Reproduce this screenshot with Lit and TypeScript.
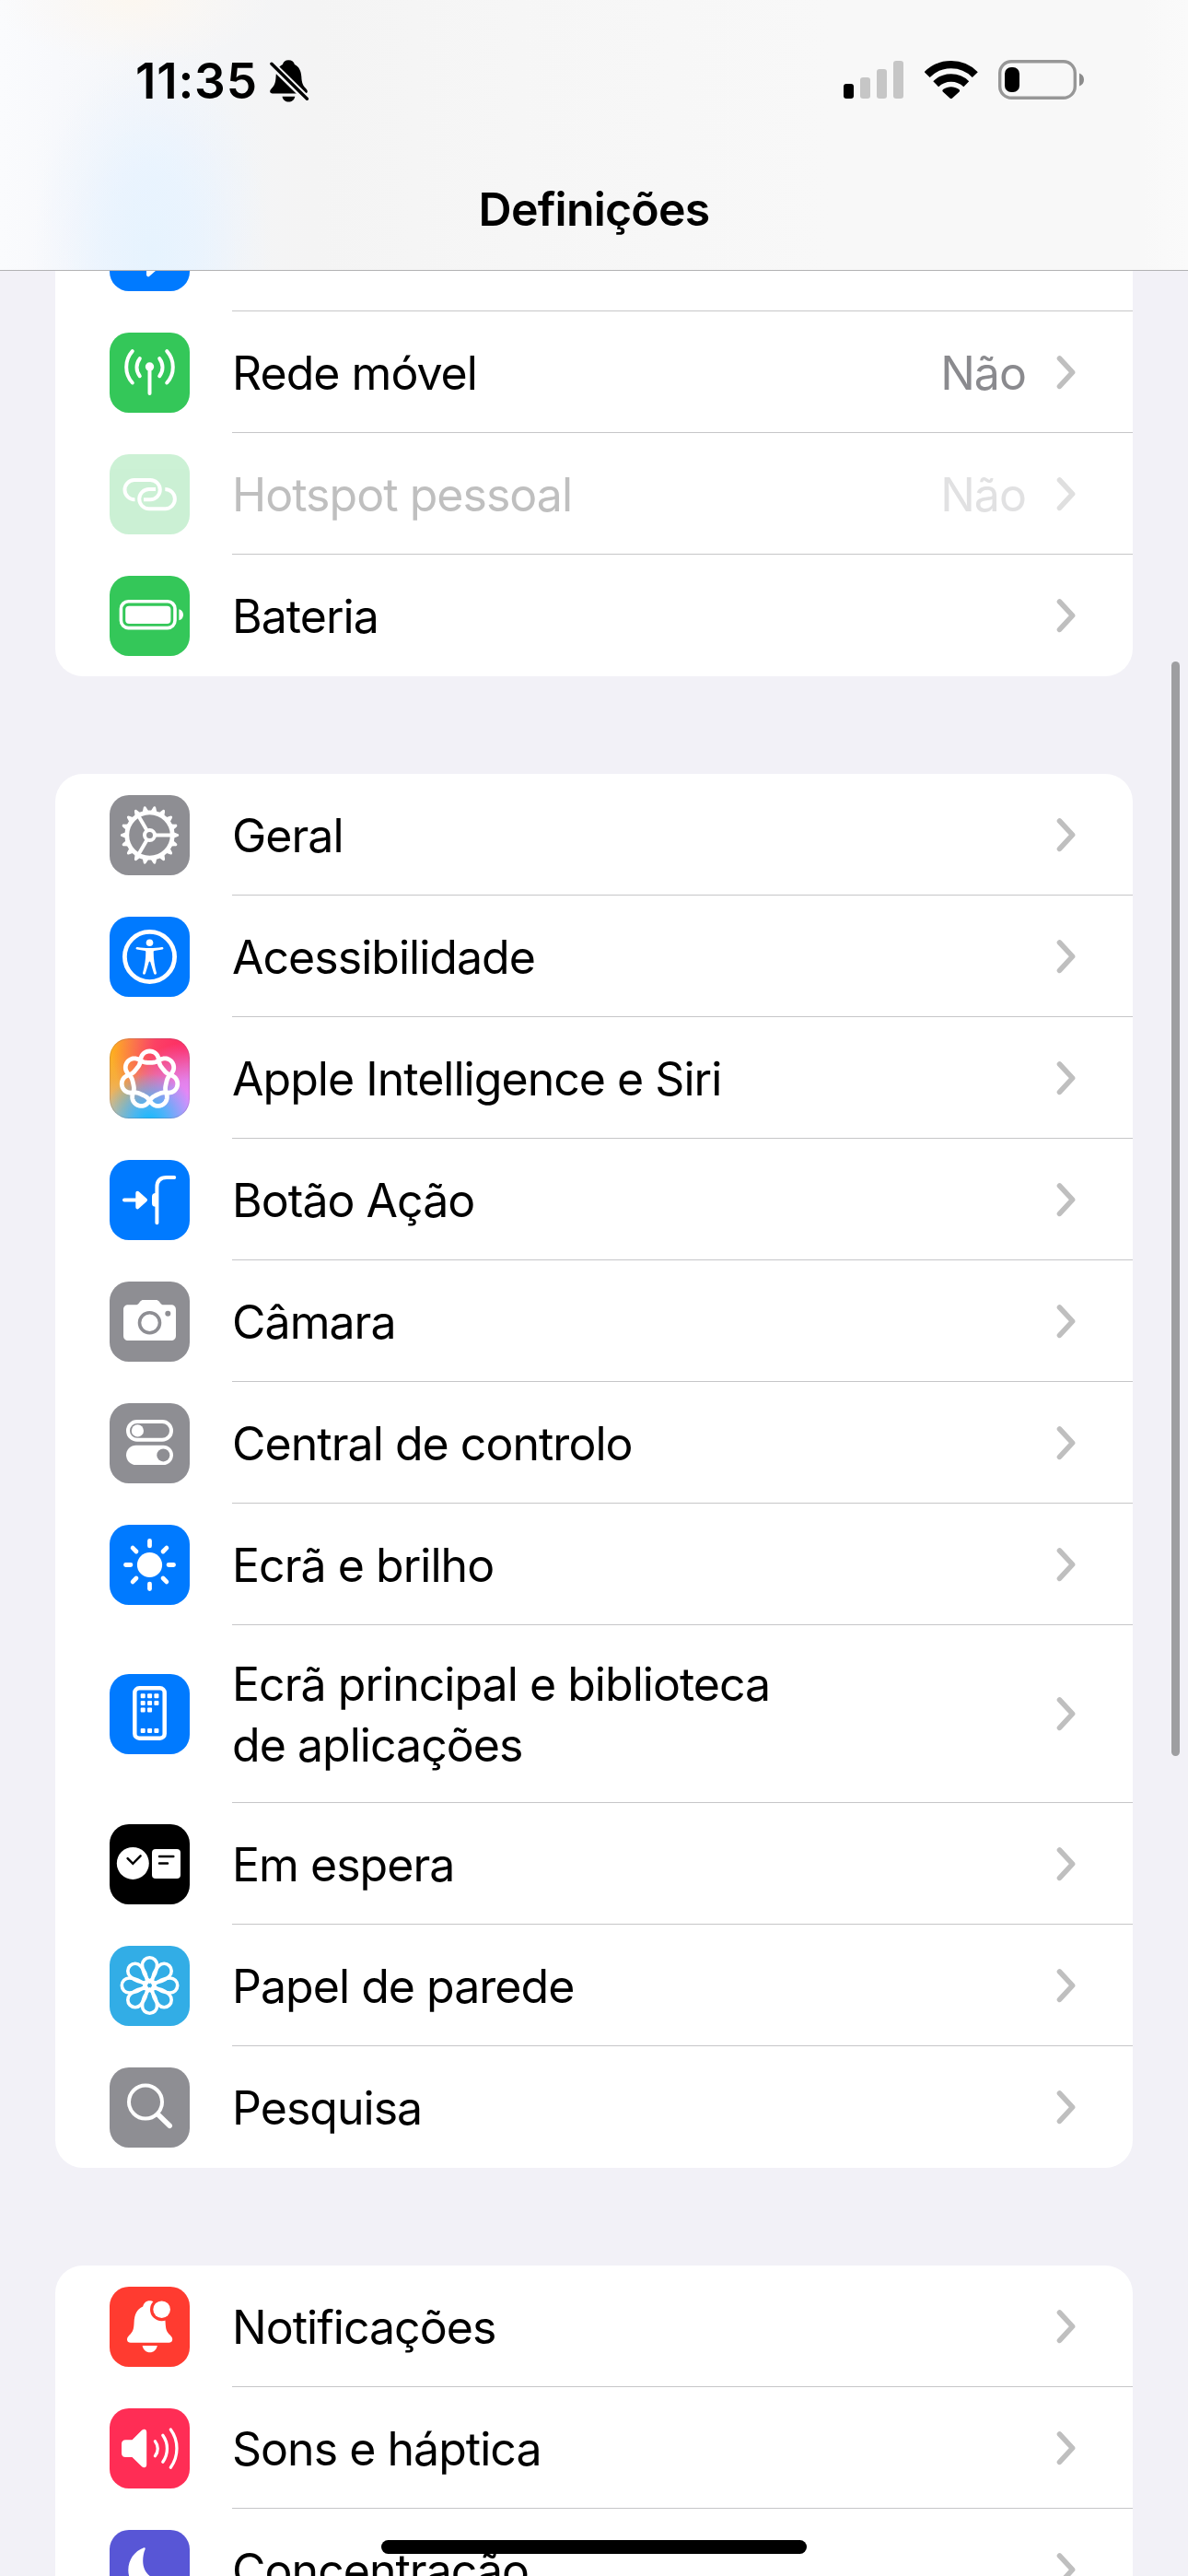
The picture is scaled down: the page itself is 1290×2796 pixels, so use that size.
import { LitElement, html, svg, css, nothing, TemplateResult, SVGTemplateResult } from "lit";
import { customElement, property } from "lit/decorators.js";
import { classMap } from "lit/directives/class-map.js";

type Glyph = SVGTemplateResult;

interface Item {
  label: string;
  lines?: string[];
  tone: string;
  glyph: Glyph;
  value?: string;
  disabled?: boolean;
}

const C = 43.5;

/** Closed seven-lobed knot: the radius oscillates 3.5 times per turn, over two turns. */
function knotPath(cx: number, cy: number, radius: number, swing: number, bulge: number): string {
  const steps = 280;
  const points: string[] = [];
  for (let i = 0; i < steps; i++) {
    const t = (i / steps) * Math.PI * 4;
    const r = radius + swing * Math.cos(3.5 * t) + 0.8 * Math.cos(7 * t);
    const a = t + bulge * Math.sin(7 * t);
    points.push(`${(cx + r * Math.sin(a)).toFixed(2)} ${(cy - r * Math.cos(a)).toFixed(2)}`);
  }
  return `M${points.join("L")}Z`;
}

const range = (n: number) => Array.from({ length: n }, (_, i) => i);

const bluetooth = svg`<path class="line w4" d="M28 30.5 56 57 42 69.3V17.7L56 30.5 28 57"/>`;

const antenna = svg`
  <circle class="solid" cx="43.5" cy="37" r="4.7"/>
  <path class="line w4" d="M43.5 38V66"/>
  <path class="line w4" d="M32.8 28.2C28.4 34 28.4 41.500 32.800 47.200M54.200 28.200C58.600 34 58.600 41.500 54.200 47.200M24.800 20.200C16 30 16 45 24.800 54.500M62.200 20.200C71 30 71 45 62.200 54.500"/>`;

const links = svg`
  <path class="line w4 butt" d="M27.500 49.200A10.500 10.500 0 0 1 26.700 28H44.200A10.600 10.600 0 0 1 44.200 49.200H37"/>
  <path class="line w4 butt" d="M50 38H42.800A10.600 10.600 0 0 0 42.800 59.200H60.300A10.600 10.600 0 0 0 60.300 38"/>`;

const battery = svg`
  <rect class="line w35" x="12.400" y="27.800" width="58.600" height="28.800" rx="8"/>
  <rect class="solid" x="17.200" y="32.700" width="49.200" height="19.200" rx="4"/>
  <path class="solid" d="M75.400 36.200C78.300 37 80 39.200 80 42.200S78.300 47.500 75.400 48.300Z"/>`;

const gear = svg`
  <circle class="line w5" cx=${C} cy=${C} r="24.700"/>
  ${range(18).map(
    (i) => svg`<path class="solid" transform="rotate(${i * 20} 43.5 43.5)" d="M69.500 40.200 73.800 41.900Q75.200 42.300 75.200 43.500T73.800 45.100L69.500 46.800Z"/>`
  )}
  <circle class="line w4" cx=${C} cy=${C} r="5.500"/>
  ${range(3).map((i) => svg`<path class="line w4 butt" transform="rotate(${i * 120} 43.5 43.5)" d="M49.500 43.500H67"/>`)}`;

const person = svg`
  <circle class="line w5" cx=${C} cy=${C} r="27.100"/>
  <circle class="solid" cx="43.500" cy="28.200" r="3.800"/>
  <path class="solid" d="M30.200 32.900C38 34.200 49 34.200 56.800 32.900C58.700 32.700 59.100 35.100 57.400 35.600L48.500 37C47.800 37.200 47.700 37.700 47.700 38.400C47.700 46 49 54 50.900 60.800C51.400 62.800 48.900 63.400 48.100 61.700L44.300 49.300Q43.500 47.700 42.700 49.300L38.900 61.700C38.100 63.400 35.600 62.800 36.100 60.800C38 54 39.300 46 39.300 38.400C39.300 37.700 39.200 37.200 38.500 37L29.600 35.600C27.900 35.100 28.300 32.700 30.200 32.900Z"/>`;

const knot = svg`<path class="line w5" d=${knotPath(43.5, 44.7, 23.8, 6.2, 0.05)}/>`;

const actionButton = svg`
  <path class="line w4" d="M16 43.500H30"/>
  <path class="solid join" d="M30.300 35.700 39 43.500 30.300 51.300Z"/>
  <path class="line w4" d="M51.400 68.200V29.500Q51.400 19 62 19H70.200"/>
  <path class="solid" d="M50 36C47.300 36 46 37.300 46 40V47C46 49.700 47.300 50.800 50 50.800Z"/>`;

const camera = svg`
  <path class="solid" d="M20.500 25.300H28.500C30 25.300 31 24.500 31.800 23.500L33.300 21.600C34.300 20.500 35 20 36.700 20H50.300C52 20 52.700 20.500 53.700 21.600L55.200 23.500C56 24.500 57 25.300 58.500 25.300H66.500C70.200 25.300 72 27.200 72 30.700V58.500C72 62.100 70.200 64 66.500 64H20.500C16.800 64 15 62.100 15 58.500V30.700C15 27.200 16.800 25.300 20.500 25.300Z"/>
  <circle class="cut w35" cx="43.500" cy="44.700" r="11"/>
  <circle class="hole" cx="63.300" cy="34.800" r="3"/>`;

const toggles = svg`
  <rect class="line w4" x="20" y="20" width="47" height="19.800" rx="9.900"/>
  <circle class="solid" cx="30.400" cy="29.900" r="6.600"/>
  <rect class="solid" x="18" y="45.700" width="51" height="21.300" rx="10.650"/>
  <circle class="hole" cx="58.300" cy="56.400" r="7"/>`;

const sun = svg`
  <circle class="solid" cx=${C} cy=${C} r="13.600"/>
  ${range(8).map((i) => svg`<path class="line w5" transform="rotate(${i * 45} 43.5 43.5)" d="M43.500 17.500V22.900"/>`)}`;

const homeScreen = svg`
  <rect class="line w45" x="27.300" y="15.300" width="32.400" height="54.400" rx="5"/>
  ${[
    [0, 21.3], [1, 21.3], [2, 21.3],
    [0, 29], [1, 29], [2, 29],
    [0, 36.5], [1, 36.5],
    [0, 59], [1, 59], [2, 59],
  ].map(([col, y]) => svg`<rect class="solid" x=${33.7 + col * 7.35} y=${y} width="5" height="5" rx="1"/>`)}`;

const standby = svg`
  <circle class="solid" cx="25.300" cy="42.400" r="17.500"/>
  <path class="cut w25" d="M19.600 37.200 25.300 42.800 33.600 34.400"/>
  <rect class="solid" x="46" y="27" width="31" height="32" rx="4"/>
  <path class="cut w25" d="M54 34.900H69.300M54 42.600H63"/>`;

const flower = svg`
  <g class="line w35">
    ${range(8).map(
      (i) => svg`<path transform="rotate(${i * 45} 43.5 43)" d="M43.500 39C37.800 33.200 35.500 28.500 35.500 20.800A8 8 0 0 1 51.500 20.800C51.500 28.500 49.200 33.200 43.500 39Z"/>`
    )}
    <circle cx="43.500" cy="43" r="5.400"/>
  </g>`;

const magnifier = svg`
  <circle class="line w4" cx="39" cy="37.500" r="18"/>
  <path class="line w55" d="M52.800 51.300 65.200 63.300"/>`;

const bell = svg`
  <path class="solid" d="M43.600 15.300C39.500 15.300 37 18 36.200 21.600C29.500 24.600 27 30.500 26.600 38.500C26.200 46.500 25.500 48.500 21.500 52.600C19.500 54.700 19 55.800 19 57.300C19 59.400 20.500 60.700 22.800 60.700H64.400C66.700 60.700 68.200 59.400 68.200 57.300C68.200 55.800 67.700 54.700 65.700 52.600C61.700 48.500 61 46.500 60.600 38.500C60.200 30.500 57.700 24.600 51 21.600C50.200 18 47.700 15.300 43.600 15.300Z"/>
  <circle class="hole" cx="56.600" cy="24.700" r="12.600"/>
  <circle class="solid" cx="56.600" cy="24.700" r="9.300"/>
  <path class="solid" d="M35.600 64H51.800C51 68.500 47.700 71.300 43.700 71.300S36.400 68.500 35.600 64Z"/>`;

const speaker = svg`
  <path class="solid" d="M17.500 34.300H24.500L34.500 24.300C37 21.900 40.200 22.200 40.200 26V61C40.200 64.600 37 65.100 34.500 62.700L24.500 53H17.500C14.600 53 13 51.400 13 48.700V38.600C13 35.900 14.600 34.300 17.500 34.300Z"/>
  <path class="line w32" d="M49.400 35.700C53.200 40.500 53.200 47 49.400 51.800M57.800 29.300C64 38 64 49.500 57.800 58.200M66.300 23C75.200 35 75.200 52 66.300 64.200"/>`;

const moon = svg`<path class="solid" d="M37.200 19.300C27 23 20.300 32.500 20.300 43.500C20.300 57.800 31 68.200 45 68.200C54.500 68.200 63 62.500 66.800 54.300C67.400 52.800 66.700 51.900 65.200 52.400C61.500 53.600 58.500 54 55.500 54C43.500 53.500 36.200 45 36.200 33.500C36.200 29 37 24.500 38.600 20.900C39 19.700 38.300 18.900 37.200 19.300Z"/>`;

const GROUPS: Item[][] = [
  [
    { label: "", tone: "blue", glyph: bluetooth },
    { label: "Rede móvel", tone: "green", glyph: antenna, value: "Não" },
    { label: "Hotspot pessoal", tone: "green", glyph: links, value: "Não", disabled: true },
    { label: "Bateria", tone: "green", glyph: battery },
  ],
  [
    { label: "Geral", tone: "gray", glyph: gear },
    { label: "Acessibilidade", tone: "blue", glyph: person },
    { label: "Apple Intelligence e Siri", tone: "aurora", glyph: knot },
    { label: "Botão Ação", tone: "blue", glyph: actionButton },
    { label: "Câmara", tone: "gray", glyph: camera },
    { label: "Central de controlo", tone: "gray", glyph: toggles },
    { label: "Ecrã e brilho", tone: "blue", glyph: sun },
    {
      label: "Ecrã principal e biblioteca de aplicações",
      lines: ["Ecrã principal e biblioteca", "de aplicações"],
      tone: "blue",
      glyph: homeScreen,
    },
    { label: "Em espera", tone: "black", glyph: standby },
    { label: "Papel de parede", tone: "cyan", glyph: flower },
    { label: "Pesquisa", tone: "gray", glyph: magnifier },
  ],
  [
    { label: "Notificações", tone: "red", glyph: bell },
    { label: "Sons e háptica", tone: "pink", glyph: speaker },
    { label: "Concentração", tone: "indigo", glyph: moon },
  ],
];

@customElement("settings-icon")
export class SettingsIcon extends LitElement {
  @property() tone = "gray";
  @property({ attribute: false }) glyph: Glyph | typeof nothing = nothing;

  static styles = css`
    :host { display: block; width: 87px; height: 87px; }
    .tile { width: 87px; height: 87px; border-radius: 21px; overflow: hidden; background: var(--tone); }
    .blue { --tone: #007aff; }
    .green { --tone: #34c759; }
    .gray { --tone: #8e8e93; }
    .black { --tone: #000; }
    .cyan { --tone: #32ade6; }
    .red { --tone: #ff3b30; }
    .pink { --tone: #ff2d55; }
    .indigo { --tone: #5856d6; }
    .aurora {
      background:
        radial-gradient(circle at 50% 104%, #12baff 0%, #2fbcfbd0 18%, #5fbdf000 52%),
        radial-gradient(circle at 100% 86%, #ea8bff 0%, #e08cffd8 25%, #d08cf000 62%),
        radial-gradient(circle at 92% 16%, #ff2a60 0%, #ff3565e0 30%, #f0507000 72%),
        radial-gradient(circle at 6% 14%, #ffb01c 0%, #fbab2de0 28%, #f0a05000 76%),
        linear-gradient(90deg, #d5c4b4, #b08cae 60%, #c98ad0);
      box-shadow: inset 0 0 0 1px rgba(90, 60, 80, 0.2);
    }
    svg { display: block; width: 87px; height: 87px; }
    .solid { fill: #fff; }
    .hole { fill: var(--tone); }
    .line { fill: none; stroke: #fff; stroke-linecap: round; stroke-linejoin: round; }
    .cut { fill: none; stroke: var(--tone); stroke-linecap: round; stroke-linejoin: miter; }
    .butt { stroke-linecap: butt; }
    .join { stroke: #fff; stroke-width: 4px; stroke-linejoin: round; }
    .w25 { stroke-width: 2.5px; }
    .w32 { stroke-width: 3.3px; }
    .w35 { stroke-width: 3.6px; }
    .w4 { stroke-width: 4px; }
    .w45 { stroke-width: 4.5px; }
    .w5 { stroke-width: 4.8px; }
    .w55 { stroke-width: 5.6px; }
  `;

  render(): TemplateResult {
    return html`<div class=${classMap({ tile: true, [this.tone]: true })}>
      <svg viewBox="0 0 87 87" aria-hidden="true">${this.glyph}</svg>
    </div>`;
  }
}

@customElement("settings-row")
export class SettingsRow extends LitElement {
  @property({ attribute: false }) item!: Item;
  @property({ type: Boolean }) last = false;

  static styles = css`
    :host { display: block; }
    .row { display: flex; align-items: stretch; padding-left: 59px; }
    .lead { display: flex; align-items: center; width: 133px; flex: none; }
    .body {
      flex: 1;
      display: flex;
      align-items: center;
      box-sizing: border-box;
      min-height: 132px;
      padding-right: 61px;
      border-bottom: 1px solid #c6c6c8;
    }
    .last .body { border-bottom-color: transparent; }
    .tall .body { min-height: 193px; }
    .label, .value {
      font: 400 50px/66px Inter, "Liberation Sans", sans-serif;
      letter-spacing: -0.97px;
      white-space: nowrap;
      padding-top: 3px;
    }
    .tall .label { padding-top: 1px; }
    .label { flex: 1; color: #000; }
    .line { display: block; }
    .value { color: #8a8a8e; margin-right: 32px; }
    .chevron { display: block; width: 23px; height: 38px; flex: none; }
    .chevron path { fill: none; stroke: #bfbfbf; stroke-width: 5.6px; stroke-linecap: round; stroke-linejoin: round; }
    .disabled settings-icon { opacity: 0.25; }
    .disabled .label { color: #bfbfbf; }
    .disabled .value { color: #e1e1e2; }
    .disabled .chevron path { stroke: #dfdfdf; }
  `;

  render(): TemplateResult {
    const { label, lines, tone, glyph, value, disabled } = this.item;
    return html`<div class=${classMap({ row: true, disabled: !!disabled, tall: !!lines, last: this.last })}>
      <div class="lead"><settings-icon .tone=${tone} .glyph=${glyph}></settings-icon></div>
      <div class="body">
        <div class="label">${(lines ?? [label]).map((l) => html`<span class="line">${l}</span>`)}</div>
        ${value ? html`<div class="value">${value}</div>` : nothing}
        <svg class="chevron" viewBox="0 0 23 38" aria-hidden="true"><path d="M4.500 4 18.600 19.200 4.500 34.400"/></svg>
      </div>
    </div>`;
  }
}

@customElement("status-bar")
export class StatusBar extends LitElement {
  static styles = css`
    :host { display: block; }
    .bar { display: flex; align-items: flex-start; padding: 65px 113px 0 147px; height: 112px; box-sizing: border-box; }
    .time { font: 600 53px/46px Inter, "Liberation Sans", sans-serif; letter-spacing: 0.8px; width: 146px; white-space: nowrap; }
    .muted { display: block; width: 43px; height: 46px; }
    .spacer { flex: 1; }
    .signal { display: block; width: 65px; height: 43px; margin-right: 23px; }
    .wifi { display: block; width: 58px; height: 43px; margin-right: 22px; }
    .battery { display: block; width: 93px; height: 43px; }
    .on { fill: #000; }
    .off { fill: #c6c6c6; }
    .arc { fill: none; stroke: #000; stroke-width: 8.4px; }
    .slash { stroke: #000; stroke-width: 3.4px; stroke-linecap: round; }
    .gap { stroke: #000; stroke-width: 8px; stroke-linecap: round; }
    .frame { fill: none; stroke: #979797; stroke-width: 3.4px; }
    .nub { fill: #8c8c8c; }
    .show { fill: #fff; }
  `;

  render(): TemplateResult {
    return html`<div class="bar">
      <div class="time">11:35</div>
      <svg class="muted" viewBox="0 0 43 46" aria-hidden="true">
        <mask id="m" maskUnits="userSpaceOnUse" x="0" y="0" width="43" height="46">
          <rect class="show" width="43" height="46"/>
          <path class="gap" d="M1.500 4.300 40.600 42.700"/>
        </mask>
        <g mask="url(#m)">
          <path class="on" d="M20.300 0.300C16.800 0.300 14.700 2.300 13.900 4.900C9 7.200 7 12 6.600 18C6.200 25 5.200 27.500 1.900 31C-1 34 0 36.500 3 36.500H37.900C41 36.500 42 34 39.100 31C35.700 27.500 34.700 25 34.300 18C33.900 12 31.800 7.200 26.900 4.900C26.100 2.300 24 .300 20.300 .300Z"/>
          <path class="on" d="M13.500 39.700H27.300C26.700 43.300 23.700 45.600 20.400 45.600S14.100 43.300 13.500 39.700Z"/>
        </g>
        <path class="slash" d="M1.900 4.300 40.400 42.300"/>
      </svg>
      <div class="spacer"></div>
      <svg class="signal" viewBox="0 0 65 43" aria-hidden="true">
        <rect class="on" x="0" y="26" width="11" height="16" rx="3"/>
        <rect class="off" x="18" y="19" width="11" height="23" rx="3"/>
        <rect class="off" x="36" y="10" width="11" height="32" rx="3"/>
        <rect class="off" x="54" y="1" width="11" height="41" rx="3"/>
      </svg>
      <svg class="wifi" viewBox="0 0 58 43" aria-hidden="true">
        <path class="arc" d="M2.700 16.100A36.500 36.500 0 0 1 54.800 16.100"/>
        <path class="arc" d="M12.200 26.200A23.800 23.800 0 0 1 45.300 26.200"/>
        <path class="on" d="M20 34.700C18.900 33.500 19.300 32.500 20.500 31.700C25.500 28.300 32 28.300 37 31.700C38.200 32.500 38.600 33.500 37.500 34.700L29.800 41.700Q28.800 42.500 27.700 41.700Z"/>
      </svg>
      <svg class="battery" viewBox="0 0 93 43" aria-hidden="true">
        <rect class="frame" x="1.700" y="1.700" width="81.600" height="39.600" rx="12.500"/>
        <rect class="on" x="7" y="8" width="16" height="27" rx="7"/>
        <path class="nub" d="M88 14.500C91.500 15.800 93 18.300 93 21.500S91.500 27.200 88 28.500Z"/>
      </svg>
    </div>`;
  }
}

@customElement("app-root")
export class AppRoot extends LitElement {
  static styles = css`
    :host { display: block; }
    .screen {
      position: relative;
      display: flex;
      flex-direction: column;
      width: 1290px;
      height: 2796px;
      overflow: hidden;
      background: #f2f1f7;
    }
    .header {
      flex: none;
      box-sizing: border-box;
      height: 294px;
      border-bottom: 1px solid #b2b2b4;
      background:
        radial-gradient(ellipse 130px 210px at 165px 275px, #e6f3fe 0%, #e7f3ffb8 40%, #eaf3fe50 72%, #eef4fb00 100%),
        radial-gradient(ellipse 130px 150px at 165px 190px, #eaf4ffa0 0%, #edf4fc50 55%, #eef4fb00 100%),
        radial-gradient(ellipse 150px 70px at 145px 0, #fcf7f0 0%, #fbf7f290 50%, #faf7f400 100%),
        linear-gradient(90deg, #fafbfd 0, #f8f9fc 60px, #f4f5f7 240px, #f4f4f4 340px, #f6f6f6 560px, #f8f8f8 900px, #f8f8f8 1240px, #fafafa 1290px);
    }
    .title {
      margin: 0;
      padding-top: 82px;
      text-align: center;
      font: 600 50px/66px Inter, "Liberation Sans", sans-serif;
      letter-spacing: -0.8px;
      color: #000;
    }
    .content { flex: 1; min-height: 0; overflow: hidden; }
    .groups { display: flex; flex-direction: column; gap: 106px; margin: -88px 60px 0; }
    .card { background: #fff; border-radius: 30px; overflow: hidden; flex: none; }
    .thumb { position: absolute; left: 1272px; top: 718px; width: 9px; height: 1188px; border-radius: 5px; background: #9e9ea1; }
    .home { position: absolute; left: 414px; top: 2757px; width: 462px; height: 15px; border-radius: 8px; background: #000; }
  `;

  render(): TemplateResult {
    return html`<main class="screen">
      <header class="header">
        <status-bar></status-bar>
        <h1 class="title">Definições</h1>
      </header>
      <div class="content">
        <div class="groups">
          ${GROUPS.map(
            (group) => html`<section class="card">
              ${group.map(
                (item, i) => html`<settings-row .item=${item} ?last=${i === group.length - 1}></settings-row>`
              )}
            </section>`
          )}
        </div>
      </div>
      <div class="thumb"></div>
      <div class="home"></div>
    </main>`;
  }
}
